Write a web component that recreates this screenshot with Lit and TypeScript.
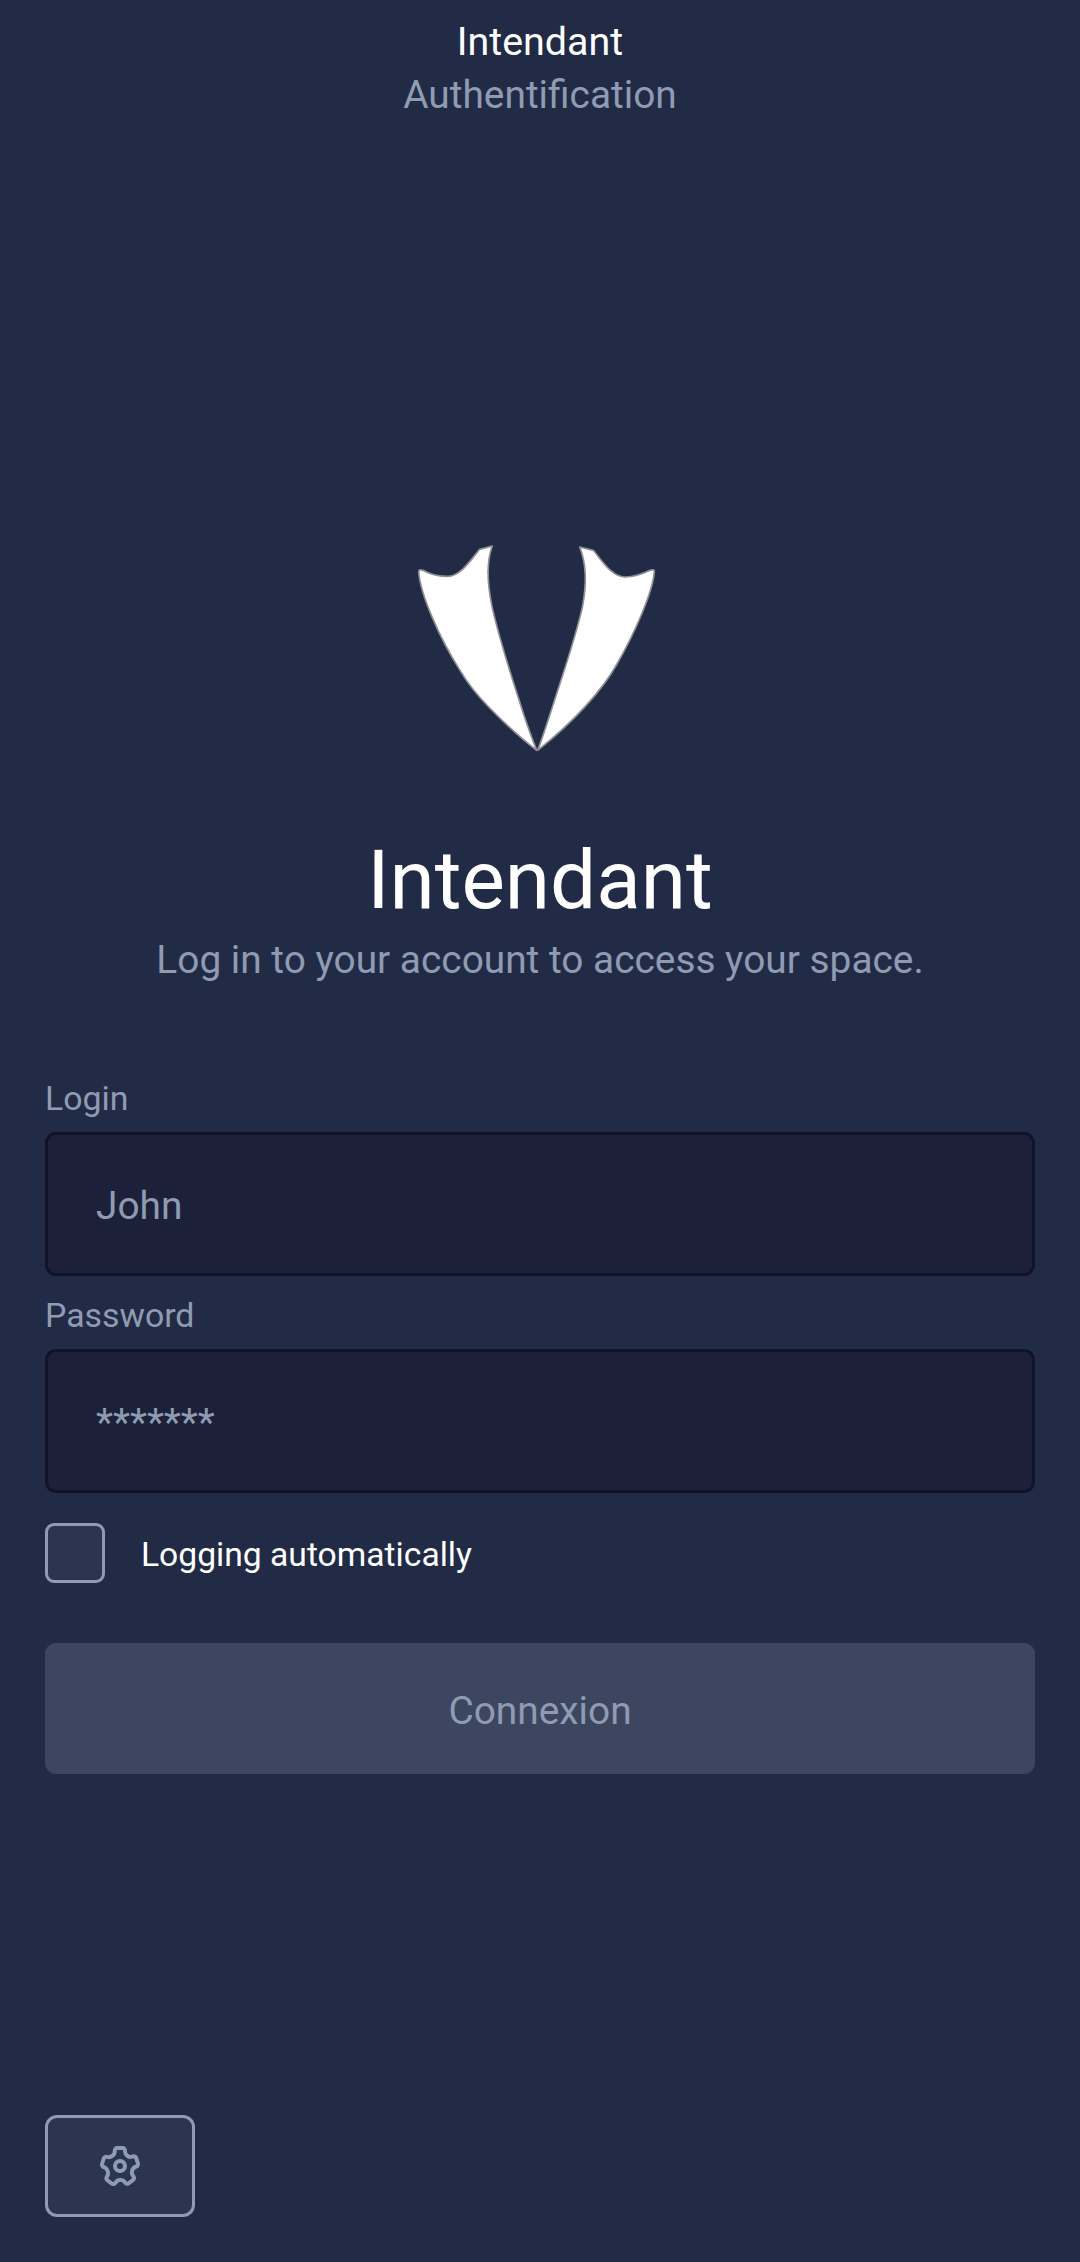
import { LitElement, html, css, svg } from "lit";
import { customElement } from "lit/decorators.js";

const logo = svg`
  <path d="M56 126C56 119 62 118 69 121C98 137 121 140 143 139C181 139 213 89 239 58L277 48C256 103 263 166 276 229C298 330 335 440 367 541C382 588 396 625 410 661C360 623 313 579 266 531C226 490 203 460 180 421C118 324 61 193 56 126Z"/>
  <path d="M763 125C764 119 758 118 750 121C719 136 699 141 677 141C637 143 606 92 580 61L539 51C559 100 560 165 547 232C525 328 491 425 461 519C443 575 427 625 413 661C466 619 515 574 556 529C594 488 625 449 651 402C707 304 759 184 763 125Z"/>
`;

@customElement("app-root")
export class AppRoot extends LitElement {
  static styles = css`
    :host {
      display: block;
      --hint: #8f9bb3;
    }
    * {
      box-sizing: border-box;
    }
    .screen {
      height: 2262px;
      padding: 15px 45px 45px;
      background: #222b45;
      color: #fff;
      font-family: Roboto, sans-serif;
      font-size: 38.85px;
      display: flex;
      flex-direction: column;
      overflow: hidden;
    }
    header {
      height: 106px;
      line-height: 53px;
      text-align: center;
    }
    .title {
      font-size: 39.4px;
    }
    .muted {
      color: var(--hint);
    }
    .hero {
      margin-top: 409px;
      display: flex;
      flex-direction: column;
      align-items: center;
    }
    .logo {
      width: 270px;
      height: 240px;
      margin-right: 10px;
      fill: #fff;
      stroke: #8d8f96;
      stroke-width: 5;
      stroke-linejoin: round;
    }
    h1 {
      margin: 62px 0 0;
      font-weight: 400;
      font-size: 81.9px;
      line-height: 96px;
    }
    .sub {
      margin: 6px 0 0;
      line-height: 52px;
    }
    form {
      margin-top: 73px;
      display: flex;
      flex-direction: column;
    }
    .label {
      padding-top: 20px;
      height: 73px;
      font-size: 33.85px;
      line-height: 40px;
      color: var(--hint);
    }
    .input {
      width: 100%;
      height: 144px;
      padding: 3px 48px 0;
      border: 3px solid #101426;
      border-radius: 11px;
      background: #1c2139;
      color: #fff;
      font: inherit;
      outline: none;
    }
    .input[type="password"] {
      font-size: 39.4px;
    }
    .input::placeholder {
      color: var(--hint);
      opacity: 1;
    }
    .check {
      margin-top: 30px;
      height: 60px;
      display: flex;
      align-items: center;
      gap: 36px;
      font-size: 33.65px;
      line-height: 40px;
    }
    .check span {
      padding-top: 3px;
    }
    .box {
      width: 60px;
      height: 60px;
      border: 3px solid var(--hint);
      border-radius: 9px;
      background: #2b354f;
    }
    .submit {
      margin-top: 60px;
      height: 131px;
      padding: 3px 0 0;
      border: 0;
      border-radius: 11px;
      background: #3c465f;
      color: var(--hint);
      font: inherit;
    }
    .settings {
      margin-top: auto;
      width: 150px;
      height: 102px;
      padding: 0;
      border: 3px solid var(--hint);
      border-radius: 12px;
      background: #2b354f;
      display: flex;
      align-items: center;
      justify-content: center;
    }
    .settings svg {
      width: 48px;
      height: 48px;
      fill: var(--hint);
    }
  `;

  render() {
    return html`
      <div class="screen">
        <header>
          <div class="title">Intendant</div>
          <div class="muted">Authentification</div>
        </header>
        <section class="hero">
          <svg class="logo" viewBox="0 0 810 720">${logo}</svg>
          <h1>Intendant</h1>
          <p class="sub muted">Log in to your account to access your space.</p>
        </section>
        <form>
          <label class="label" for="login">Login</label>
          <input class="input" id="login" placeholder="John" />
          <label class="label" for="password">Password</label>
          <input class="input" id="password" type="password" placeholder="*******" />
          <div class="check"><div class="box"></div><span>Logging automatically</span></div>
          <button class="submit" type="button" disabled>Connexion</button>
        </form>
        <button class="settings" type="button" aria-label="Settings">
          <svg viewBox="0 0 24 24">
            <path
              fill-rule="evenodd"
              d="M8.61 22a2.25 2.25 0 0 1-1.35-.46L5.19 20a2.37 2.37 0 0 1-.49-3.22 2.06 2.06 0 0 0 .23-1.86l-.06-.16a1.83 1.83 0 0 0-1.12-1.22h-.16a2.34 2.34 0 0 1-1.48-2.94L2.93 8a2.18 2.18 0 0 1 1.12-1.41 2.14 2.14 0 0 1 1.68-.12 1.93 1.93 0 0 0 1.78-.29l.13-.1a1.94 1.94 0 0 0 .73-1.51v-.24A2.32 2.32 0 0 1 10.66 2h2.55a2.26 2.26 0 0 1 1.6.67 2.37 2.37 0 0 1 .68 1.68v.28a1.76 1.76 0 0 0 .69 1.43l.11.08a1.74 1.74 0 0 0 1.59.26l.34-.11A2.26 2.26 0 0 1 21.1 7.8l.79 2.52a2.36 2.36 0 0 1-1.46 2.93l-.2.07A1.89 1.89 0 0 0 19 14.6a2 2 0 0 0 .25 1.65l.26.38a2.38 2.38 0 0 1-.5 3.23L17 21.41a2.24 2.24 0 0 1-3.22-.53l-.12-.17a1.75 1.75 0 0 0-1.5-.78 1.8 1.8 0 0 0-1.43.77l-.23.33A2.25 2.25 0 0 1 9 22a2 2 0 0 1-.39 0zM4.4 11.62a3.83 3.83 0 0 1 2.38 2.5v.12a4 4 0 0 1-.46 3.62.38.38 0 0 0 0 .51L8.47 20a.25.25 0 0 0 .37-.07l.23-.33a3.77 3.77 0 0 1 6.2 0l.12.18a.3.3 0 0 0 .18.12.25.25 0 0 0 .19-.05l2.06-1.56a.36.36 0 0 0 .07-.49l-.26-.38A4 4 0 0 1 17.1 14a3.92 3.92 0 0 1 2.49-2.61l.2-.07a.34.34 0 0 0 .19-.44l-.78-2.49a.35.35 0 0 0-.2-.19.21.21 0 0 0-.19 0l-.34.11a3.74 3.74 0 0 1-3.43-.57L15 7.65a3.76 3.76 0 0 1-1.49-3v-.31a.37.37 0 0 0-.1-.26.31.31 0 0 0-.21-.08h-2.54a.31.31 0 0 0-.29.33v.25a3.9 3.9 0 0 1-1.52 3.09l-.13.1a3.91 3.91 0 0 1-3.63.59.22.22 0 0 0-.14 0 .28.28 0 0 0-.12.15L4 11.12a.36.36 0 0 0 .22.45z"
            />
            <path d="M12 15.5a3.5 3.5 0 1 1 3.5-3.5 3.5 3.5 0 0 1-3.5 3.5zm0-5a1.5 1.5 0 1 0 1.5 1.5 1.5 1.5 0 0 0-1.5-1.5z" />
          </svg>
        </button>
      </div>
    `;
  }
}
